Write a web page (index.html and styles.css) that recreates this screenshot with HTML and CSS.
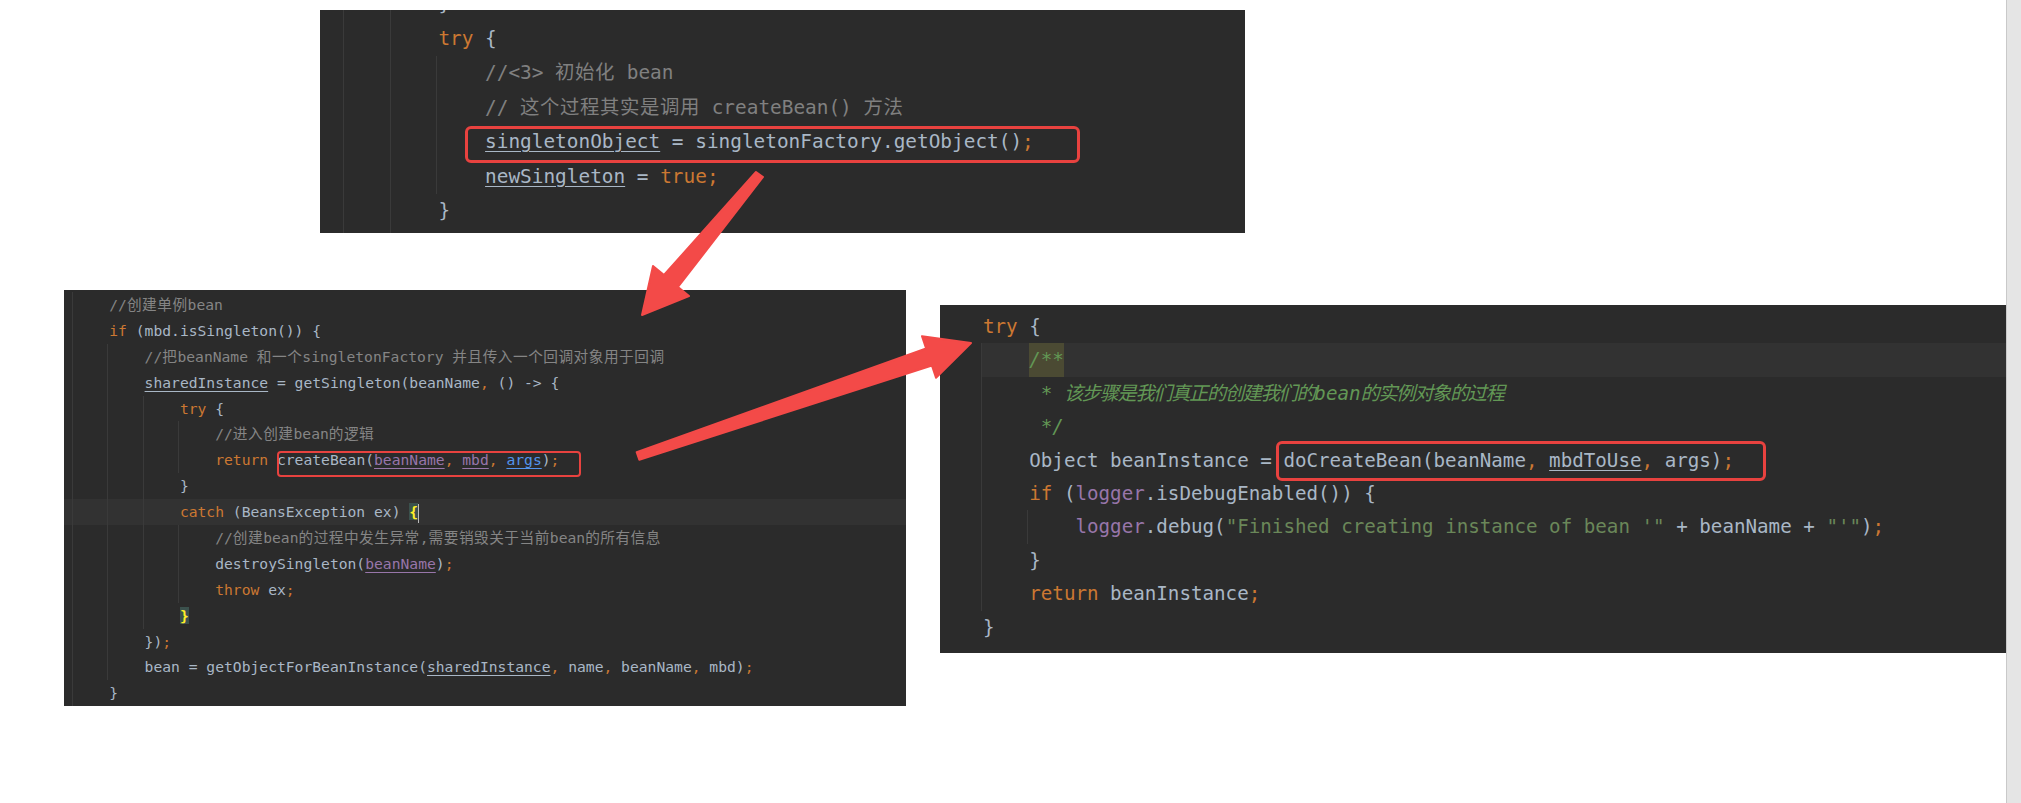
FILE: index.html
```html
<!DOCTYPE html>
<html lang="zh">
<head>
<meta charset="utf-8">
<title>getSingleton → createBean → doCreateBean</title>
<link rel="stylesheet" href="styles.css">
</head>
<body>
<div class="page">
  <div class="canvas">
    <div class="panel top">
      <div class="code">
        <div class="blk">
          <div class="blk">
            <div class="ln">}</div>
            <div class="ln"><span class="k">try</span> {</div>
            <div class="blk">
              <div class="ln"><span class="c">//&lt;3&gt; <span class="zh">初始化</span> bean</span></div>
              <div class="ln"><span class="c">// <span class="zh">这个过程其实是调用</span> createBean() <span class="zh">方法</span></span></div>
              <div class="ln"><span class="u">singletonObject</span> = singletonFactory.getObject()<span class="k">;</span></div>
              <div class="ln"><span class="u">newSingleton</span> = <span class="k">true;</span></div>
            </div>
            <div class="ln">}</div>
            <div class="ln"></div>
          </div>
        </div>
      </div>
      <div class="mark mark-top"></div>
    </div>

    <div class="row">
      <div class="panel left">
        <div class="code">
          <div class="blk">
            <div class="ln"><span class="c">//<span class="zh">创建单例</span>bean</span></div>
            <div class="ln"><span class="k">if</span> (mbd.isSingleton()) {</div>
            <div class="blk">
              <div class="ln"><span class="c">//<span class="zh">把</span>beanName <span class="zh">和一个</span>singletonFactory <span class="zh">并且传入一个回调对象用于回调</span></span></div>
              <div class="ln"><span class="u">sharedInstance</span> = getSingleton(beanName<span class="k">,</span> () -&gt; {</div>
              <div class="blk">
                <div class="ln"><span class="k">try</span> {</div>
                <div class="blk">
                  <div class="ln"><span class="c">//<span class="zh">进入创建</span>bean<span class="zh">的逻辑</span></span></div>
                  <div class="ln"><span class="k">return</span> createBean(<span class="pv">beanName</span><span class="k">,</span> <span class="pv">mbd</span><span class="k">,</span> <span class="av">args</span>)<span class="k">;</span></div>
                </div>
                <div class="ln">}</div>
                <div class="ln cur"><span class="k">catch</span> (BeansException ex) <span class="bm">{</span><span class="caret"></span></div>
                <div class="blk">
                  <div class="ln"><span class="c">//<span class="zh">创建</span>bean<span class="zh">的过程中发生异常</span>,<span class="zh">需要销毁关于当前</span>bean<span class="zh">的所有信息</span></span></div>
                  <div class="ln">destroySingleton(<span class="pv">beanName</span>)<span class="k">;</span></div>
                  <div class="ln"><span class="k">throw</span> ex<span class="k">;</span></div>
                </div>
                <div class="ln"><span class="bm">}</span></div>
              </div>
              <div class="ln">})<span class="k">;</span></div>
              <div class="ln">bean = getObjectForBeanInstance(<span class="u">sharedInstance</span><span class="k">,</span> name<span class="k">,</span> beanName<span class="k">,</span> mbd)<span class="k">;</span></div>
            </div>
            <div class="ln">}</div>
          </div>
        </div>
        <div class="mark mark-left"></div>
      </div>

      <div class="panel right">
        <div class="code">
          <div class="ln"><span class="k">try</span> {</div>
          <div class="blk">
            <div class="ln cur"><span class="doc dochl">/**</span></div>
            <div class="ln"><span class="doc"> * <span class="zh">该步骤是我们真正的创建我们的</span>bean<span class="zh">的实例对象的过程</span></span></div>
            <div class="ln"><span class="doc"> */</span></div>
            <div class="ln">Object beanInstance = doCreateBean(beanName<span class="k">,</span> <span class="u">mbdToUse</span><span class="k">,</span> args)<span class="k">;</span></div>
            <div class="ln"><span class="k">if</span> (<span class="f">logger</span>.isDebugEnabled()) {</div>
            <div class="blk">
              <div class="ln"><span class="f">logger</span>.debug(<span class="s">"Finished creating instance of bean '"</span> + beanName + <span class="s">"'"</span>)<span class="k">;</span></div>
            </div>
            <div class="ln">}</div>
            <div class="ln"><span class="k">return</span> beanInstance<span class="k">;</span></div>
          </div>
          <div class="ln">}</div>
          <div class="ln next"><span class="k">catch</span> (BeanCreationException | ImplicitlyAppearedSingletonException ex) {</div>
        </div>
        <div class="mark mark-right"></div>
      </div>
    </div>

    <svg class="arrows" width="2006" height="803" viewBox="0 0 2006 803" aria-hidden="true">
      <polygon points="756,172 763,177 678,287 689,296 642,315 653,266 664,275" />
      <polygon points="636.7,452.2 926.1,348.5 922,336.2 971,343 936,377.8 931.9,365.5 639.3,459.8" />
    </svg>
  </div>
  <div class="scrollbar"></div>
</div>
</body>
</html>
```

FILE: styles.css
```css
html, body {
  margin: 0;
  padding: 0;
  background: #ffffff;
  overflow: hidden;
}

.page {
  display: flex;
  width: 2021px;
  height: 803px;
}

.canvas {
  flex: 1;
  position: relative;
  padding-top: 10px;
  background: #ffffff;
}

.scrollbar {
  width: 15px;
  box-sizing: border-box;
  border-left: 1px solid #c9c9c9;
  background: #e5e5e5;
}

/* ---------- code panels ---------- */
.panel {
  position: relative;
  overflow: hidden;
  isolation: isolate;
  background: #2b2b2b;
  color: #a9b7c6;
  font-family: "DejaVu Sans Mono", "Noto Sans CJK SC", monospace;
  font-size: var(--fs);
  --guide: #3a3a3a;
}

.code {
  padding-left: var(--col0);
}

.blk {
  margin-left: -2px;
  border-left: 1px solid var(--guide);
  padding-left: calc(var(--ind) + 1px);
}

.ln {
  position: relative;
  height: var(--lh);
  line-height: var(--lh);
  white-space: pre;
}

.ln.cur::before {
  content: "";
  position: absolute;
  top: 0;
  bottom: 0;
  left: -2000px;
  right: -2000px;
  background: #323232;
  z-index: -1;
}

.top {
  --fs: 19.4px;
  --lh: 34.5px;
  --ind: 46.7px;
  --col0: 25px;
  margin-left: 320px;
  width: 925px;
  height: 223px;
}
.top .code { margin-top: -23px; }
.top .zh { letter-spacing: 0.6px; }

.row {
  display: flex;
  align-items: flex-start;
  margin-top: 57px;
}

.left {
  --fs: 14.66px;
  --lh: 25.9px;
  --ind: 35.3px;
  --col0: 10px;
  margin-left: 64px;
  width: 842px;
  height: 416px;
}
.left .code { padding-top: 2px; }
.left .zh { letter-spacing: 0.5px; }
.left .c { color: #858585; }

.right {
  --fs: 19.2px;
  --lh: 33.4px;
  --ind: 46.24px;
  --col0: 43px;
  margin-left: 34px;
  margin-top: 15px;
  width: 1066px;
  height: 348px;
}
.right .code { padding-top: 5px; }
.right .ln.cur::before { left: -48px; }
.right .zh { letter-spacing: -1.3px; }
.right .ln.next { margin-top: 3px; }

/* ---------- syntax colours (Darcula) ---------- */
.k { color: #cc7832; }
.c { color: #808080; }
.doc { color: #629755; font-style: italic; }
.s { color: #6a8759; }
.f { color: #9876aa; }
.u {
  text-decoration: underline;
  text-decoration-thickness: 1px;
  text-underline-offset: 3px;
}
.pv {
  color: #9876aa;
  text-decoration: underline;
  text-decoration-thickness: 1px;
  text-underline-offset: 3px;
}
.av {
  color: #5394ec;
  text-decoration: underline;
  text-decoration-thickness: 1px;
  text-underline-offset: 3px;
}

.bm {
  background: #3b514d;
  color: #ffef28;
  font-weight: bold;
}

.caret {
  display: inline-block;
  width: 1px;
  height: 19px;
  background: #bbbbbb;
  vertical-align: middle;
}

.dochl {
  display: inline-block;
  height: var(--lh);
  background: #4b4a33;
}

/* ---------- red annotation boxes ---------- */
.mark {
  position: absolute;
  box-sizing: border-box;
  border: 3px solid #e8423f;
  border-radius: 6px;
}
.mark-top   { left: 145px; top: 116px; width: 615px; height: 37px; }
.mark-left  { left: 213px; top: 161px; width: 304px; height: 26px; border-width: 2px; border-radius: 4px; }
.mark-right { left: 336px; top: 136px; width: 490px; height: 40px; }

/* ---------- arrows ---------- */
.arrows {
  position: absolute;
  left: 0;
  top: 0;
  pointer-events: none;
}
.arrows polygon {
  fill: #f34a48;
  stroke: #f34a48;
  stroke-width: 2;
  stroke-linejoin: round;
}
```
